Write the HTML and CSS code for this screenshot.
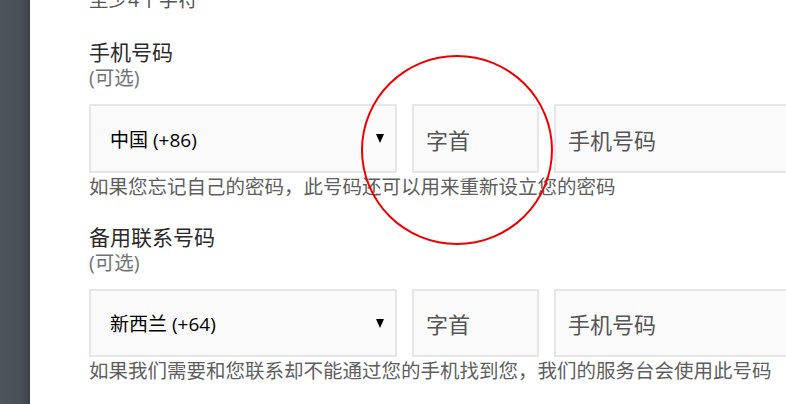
FILE: index.html
```html
<!DOCTYPE html>
<html lang="zh-CN">
<head>
<meta charset="utf-8">
<title>手机号码</title>
<link rel="stylesheet" href="styles.css">
</head>
<body>
<div class="page">
  <div class="sidebar"></div>
  <main class="main">
    <div class="hint-top">至少4个字符</div>

    <section class="field field-first">
      <div class="label">手机号码</div>
      <div class="optional">(可选)</div>
      <div class="row">
        <div class="box select"><span class="sel-text">中国 (+86)</span><span class="caret"></span></div>
        <div class="box prefix"><span class="ph">字首</span></div>
        <div class="box phone"><span class="ph">手机号码</span></div>
      </div>
      <div class="help">如果您忘记自己的密码，此号码还可以用来重新设立您的密码</div>
    </section>

    <section class="field field-second">
      <div class="label">备用联系号码</div>
      <div class="optional">(可选)</div>
      <div class="row">
        <div class="box select"><span class="sel-text">新西兰 (+64)</span><span class="caret"></span></div>
        <div class="box prefix"><span class="ph">字首</span></div>
        <div class="box phone"><span class="ph">手机号码</span></div>
      </div>
      <div class="help">如果我们需要和您联系却不能通过您的手机找到您，我们的服务台会使用此号码</div>
    </section>
  </main>
  <div class="annotation"></div>
</div>
</body>
</html>
```

FILE: styles.css
```css
* { box-sizing: border-box; }
html, body {
  margin: 0;
  padding: 0;
  width: 786px;
  height: 404px;
  overflow: hidden;
  background: #fff;
}
body {
  font-family: "Open Sans", "Noto Sans CJK SC", sans-serif;
}
.page {
  position: relative;
  display: flex;
  width: 786px;
  height: 404px;
  overflow: hidden;
}
.sidebar {
  flex: 0 0 30px;
  background: linear-gradient(to right, #4e545b 0%, #4a5057 70%, #3d4147 100%);
}
.main {
  flex: 1;
  padding-left: 59px;
  overflow: hidden;
}
.hint-top {
  margin-top: -13px;
  height: 26px;
  line-height: 26px;
  font-size: 19.5px;
  color: #555;
  white-space: nowrap;
}
.field-first { margin-top: 26px; }
.field-second { margin-top: 23.5px; }
.label {
  height: 26px;
  line-height: 26px;
  font-size: 21px;
  color: #2a2a2a;
  white-space: nowrap;
}
.optional {
  height: 25px;
  line-height: 25px;
  font-size: 19.5px;
  color: #6f7378;
  white-space: nowrap;
}
.row {
  display: flex;
  gap: 15px;
  margin-top: 14px;
  width: 760px;
}
.field-second .row { margin-top: 14.5px; }
.box {
  height: 69px;
  border: 2px solid #e6e6e6;
  background: #fafafa;
  display: flex;
  align-items: center;
  flex: 0 0 auto;
}
.field-second .box { height: 68px; }
.select {
  width: 308px;
  padding: 0 11px 0 19px;
  justify-content: space-between;
}
.sel-text {
  font-size: 19px;
  color: #000;
  white-space: nowrap;
}
.caret {
  width: 0;
  height: 0;
  border-left: 4.5px solid transparent;
  border-right: 4.5px solid transparent;
  border-top: 9px solid #000;
}
.prefix {
  width: 127px;
  padding-left: 12px;
}
.phone {
  width: 300px;
  padding-left: 12px;
}
.ph {
  font-size: 22px;
  color: #555;
  white-space: nowrap;
}
.help {
  margin-top: 1px;
  height: 26px;
  line-height: 26px;
  font-size: 19.5px;
  color: #5e5e5e;
  white-space: nowrap;
}
.annotation {
  position: absolute;
  left: 361px;
  top: 55px;
  width: 192px;
  height: 190px;
  border: 2px solid #ee0000;
  border-radius: 50%;
  pointer-events: none;
}
```
